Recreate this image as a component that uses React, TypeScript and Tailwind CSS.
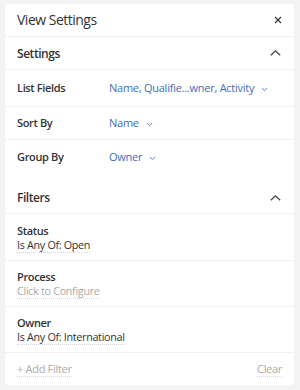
import React from 'react';

const ChevronDown = () => (
  <svg width="7" height="5" viewBox="0 0 7 5" className="ml-[7px] mt-[1px]">
    <path d="M0.8 1 L3.5 3.6 L6.2 1" fill="none" stroke="#5b80c0" strokeWidth="1" />
  </svg>
);

const ChevronUp = () => (
  <svg width="11" height="6" viewBox="0 0 11 6">
    <path d="M0.8 5.3 L5.5 0.9 L10.2 5.3" fill="none" stroke="#444" strokeWidth="1.3" />
  </svg>
);

const CloseIcon = () => (
  <svg width="8" height="8" viewBox="0 0 8 8">
    <path d="M1 1 L7 7 M7 1 L1 7" fill="none" stroke="#3a3a3a" strokeWidth="1.3" />
  </svg>
);

const settings = [
  { label: 'List Fields', value: 'Name, Qualifie...wner, Activity', h: 'h-[37px]', border: true },
  { label: 'Sort By', value: 'Name', h: 'h-[33px]', border: true },
  { label: 'Group By', value: 'Owner', h: 'h-[34px]', border: false },
];

const filters = [
  { label: 'Status', value: 'Is Any Of: Open', muted: false, h: 'h-[47px]' },
  { label: 'Process', value: 'Click to Configure', muted: true, h: 'h-[46px]' },
  { label: 'Owner', value: 'Is Any Of: International', muted: false, h: 'h-[46px]' },
];

export default function App() {
  return (
    <div className="w-[300px] h-[390px] bg-[#f3f3f4] pt-[4px] pl-[5px]" style={{ fontFamily: '"Open Sans", sans-serif' }}>
      <div className="w-[289px] h-[381px] bg-white rounded-[4px] flex flex-col text-[#333]">
        {/* Header */}
        <div className="h-[33px] shrink-0 flex items-center justify-between pl-[12px] pr-[12px] border-b border-[#f1f1f2]">
          <span className="text-[14px] leading-[18px] tracking-[-0.5px]">View Settings</span>
          <CloseIcon />
        </div>

        {/* Settings */}
        <div className="h-[33px] shrink-0 flex items-center justify-between pl-[12px] pr-[13px] border-b border-[#f1f1f2]">
          <span className="text-[12px] font-semibold tracking-[-0.45px] pt-[1px]">Settings</span>
          <ChevronUp />
        </div>
        {settings.map((s) => (
          <div
            key={s.label}
            className={`${s.h} shrink-0 flex items-center pl-[12px] pt-[1px] ${s.border ? 'border-b border-[#f1f1f2]' : ''}`}
          >
            <span className="w-[92px] text-[11px] font-semibold tracking-[-0.35px]">{s.label}</span>
            <span className="text-[11px] text-[#3f6db5] tracking-[-0.25px]">{s.value}</span>
            <ChevronDown />
          </div>
        ))}

        {/* Filters */}
        <div className="h-[32px] shrink-0 mt-[8px] flex items-center justify-between pl-[12px] pr-[13px] border-b border-[#f1f1f2]">
          <span className="text-[12px] font-semibold tracking-[-0.45px]">Filters</span>
          <ChevronUp />
        </div>
        {filters.map((f) => (
          <div key={f.label} className={`${f.h} shrink-0 flex flex-col justify-center pl-[12px] pt-[1px] border-b border-[#f1f1f2]`}>
            <span className="text-[11px] font-semibold leading-[15px] tracking-[-0.35px]">{f.label}</span>
            <span
              className={`text-[10.75px] leading-[14px] tracking-[-0.3px] self-start border-b border-dotted border-[#d4d4d4] ${f.muted ? 'text-[#a9a9a9]' : 'text-[#333]'}`}
            >
              {f.value}
            </span>
          </div>
        ))}
        <div className="flex-1 flex items-center justify-between pl-[12px] pr-[12px]">
          <span className="text-[11px] tracking-[-0.3px] text-[#aaa] border-b border-dotted border-[#d8d8d8] leading-[14px]">+ Add Filter</span>
          <span className="text-[11px] tracking-[-0.3px] text-[#aaa] border-b border-dotted border-[#d8d8d8] leading-[14px]">Clear</span>
        </div>
      </div>
    </div>
  );
}
